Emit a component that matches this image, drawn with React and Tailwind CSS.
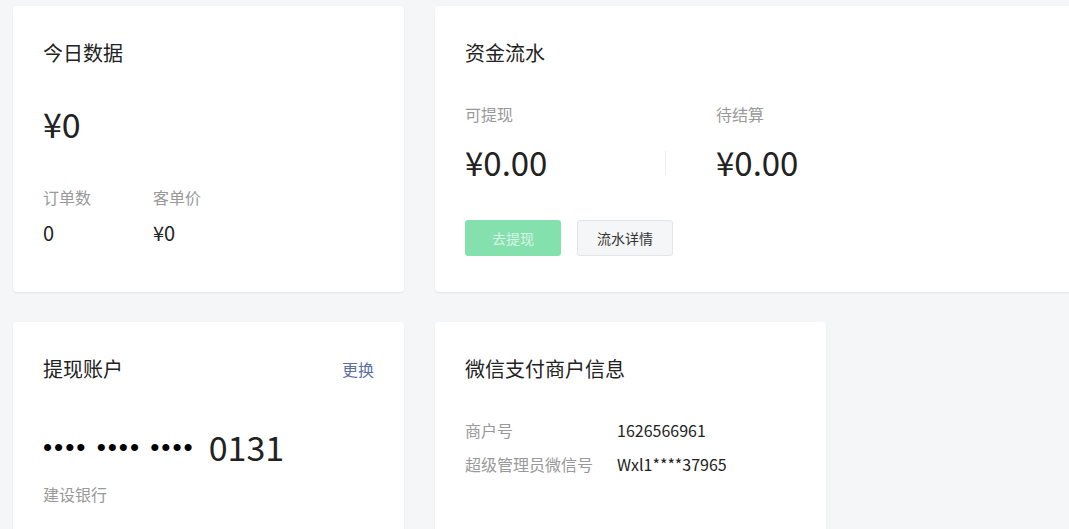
import React from "react";

const font = { fontFamily: '"Noto Sans CJK SC", "Noto Sans", sans-serif' };

const Card = ({ className = "", children }) => (
  <div
    className={`bg-white rounded-[4px] shadow-[0_1px_2px_rgba(0,0,0,0.08)] ${className}`}
  >
    {children}
  </div>
);

const App = () => {
  return (
    <div
      className="w-[1069px] h-[529px] overflow-hidden bg-[#f5f6f8] text-[#222]"
      style={font}
    >
      <div className="w-[1300px] pt-[6px] pl-[13px] flex flex-col gap-[30px]">
        {/* top row */}
        <div className="flex gap-[31px]">
          <Card className="w-[391px] h-[286px] px-[30px] pt-[34px]">
            <h2 className="text-[20px] leading-[26px]">今日数据</h2>
            <p className="mt-[36px] text-[34px] leading-[44px]">¥0</p>
            <div className="mt-[40px] flex">
              <div className="w-[110px]">
                <p className="text-[16px] leading-[22px] text-[#999]">订单数</p>
                <p className="mt-[12px] text-[20px] leading-[26px]">0</p>
              </div>
              <div>
                <p className="text-[16px] leading-[22px] text-[#999]">客单价</p>
                <p className="mt-[12px] text-[20px] leading-[26px]">¥0</p>
              </div>
            </div>
          </Card>

          <Card className="w-[813px] h-[286px] px-[30px] pt-[34px]">
            <h2 className="text-[20px] leading-[26px]">资金流水</h2>
            <div className="mt-[37px] flex items-end">
              <div className="w-[200px]">
                <p className="text-[16px] leading-[22px] text-[#999]">可提现</p>
                <p className="mt-[15px] text-[33px] leading-[44px]">¥0.00</p>
              </div>
              <div className="w-px h-[24px] bg-[#eee] mb-[9px]" />
              <div className="pl-[50px]">
                <p className="text-[16px] leading-[22px] text-[#999]">待结算</p>
                <p className="mt-[15px] text-[33px] leading-[44px]">¥0.00</p>
              </div>
            </div>
            <div className="mt-[36px] flex gap-[16px]">
              <button className="w-[96px] h-[36px] rounded-[3px] bg-[#84e0ad] text-[14px] text-[#d9f5e6]">
                去提现
              </button>
              <button className="w-[96px] h-[36px] rounded-[3px] bg-[#f5f6f8] border border-[#e2e4e8] text-[14px] text-[#333]">
                流水详情
              </button>
            </div>
          </Card>
        </div>

        {/* bottom row */}
        <div className="flex gap-[31px]">
          <Card className="w-[391px] h-[260px] px-[30px] pt-[34px]">
            <div className="flex justify-between items-center">
              <h2 className="text-[20px] leading-[26px]">提现账户</h2>
              <span className="text-[16px] text-[#5b6ea5]">更换</span>
            </div>
            <div className="mt-[45px] flex items-center gap-[14px] whitespace-nowrap">
              <span
                className="text-[26px] leading-[40px] tracking-[2px] text-black"
                style={{ fontFamily: '"Liberation Sans", Arial, sans-serif' }}
              >
                •••• •••• ••••
              </span>
              <span className="text-[34px] leading-[40px]">0131</span>
            </div>
            <p className="mt-[16px] text-[16px] leading-[22px] text-[#999]">建设银行</p>
          </Card>

          <Card className="w-[391px] h-[260px] px-[30px] pt-[34px]">
            <h2 className="text-[20px] leading-[26px]">微信支付商户信息</h2>
            <div className="mt-[37px] flex flex-col gap-[12px]">
              <div className="flex items-center">
                <span className="w-[152px] text-[16px] leading-[22px] text-[#999]">商户号</span>
                <span className="text-[16px] leading-[22px]">1626566961</span>
              </div>
              <div className="flex items-center">
                <span className="w-[152px] text-[16px] leading-[22px] text-[#999]">超级管理员微信号</span>
                <span className="text-[16px] leading-[22px]">Wxl1****37965</span>
              </div>
            </div>
          </Card>
        </div>
      </div>
    </div>
  );
};

export default App;
